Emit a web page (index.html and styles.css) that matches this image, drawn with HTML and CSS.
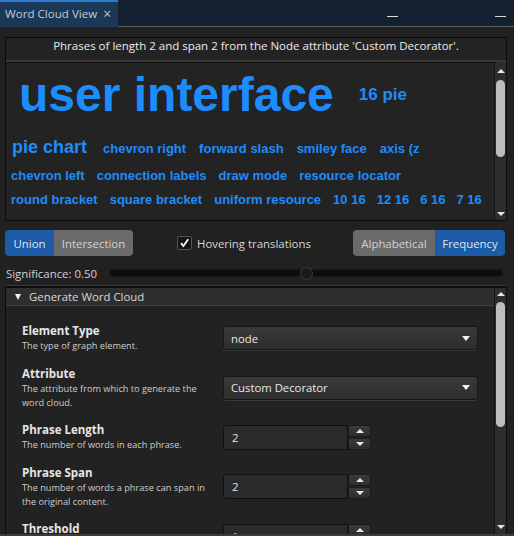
FILE: index.html
```html
<!DOCTYPE html>
<html>
<head>
<meta charset="utf-8">
<link rel="stylesheet" href="styles.css">
</head>
<body>
<div class="app">
  <div class="topbar">
    <div class="tab"><span class="tab-title">Word Cloud View</span><span class="tab-close">×</span></div>
    <div class="topbar-rest">
      <span class="min min-1"></span>
      <span class="min min-2"></span>
    </div>
  </div>
  <div class="content">
    <div class="cloud-box">
      <div class="cloud-title">Phrases of length 2 and span 2 from the Node attribute 'Custom Decorator'.</div>
      <div class="cloud">
        <div class="cloud-words">
          <div class="row row-1">
            <span class="w w-xl">user interface</span>
            <span class="w w-m">16 pie</span>
          </div>
          <div class="row row-2">
            <span class="w w-l">pie chart</span><span class="w">chevron right</span><span class="w">forward slash</span><span class="w">smiley face</span><span class="w">axis (z</span>
          </div>
          <div class="row row-3">
            <span class="w">chevron left</span><span class="w">connection labels</span><span class="w">draw mode</span><span class="w">resource locator</span>
          </div>
          <div class="row row-4">
            <span class="w">round bracket</span><span class="w">square bracket</span><span class="w">uniform resource</span><span class="w w-n">10 16</span><span class="w w-n">12 16</span><span class="w w-n">6 16</span><span class="w w-n">7 16</span>
          </div>
          <div class="row row-5">
            <span class="w">5 16</span><span class="w">text label</span><span class="w">double click</span><span class="w">bold text</span><span class="w">right click</span><span class="w">line chart</span>
          </div>
        </div>
        <div class="vscroll vscroll-cloud">
          <div class="vs-up"><span class="tri-up"></span></div>
          <div class="vs-thumb"></div>
          <div class="vs-fill"></div>
          <div class="vs-down"><span class="tri-down"></span></div>
        </div>
      </div>
    </div>

    <div class="controls">
      <div class="seg">
        <div class="btn active btn-union">Union</div>
        <div class="btn btn-inter">Intersection</div>
      </div>
      <div class="check-group">
        <span class="checkbox">
          <svg width="15" height="14" viewBox="0 0 15 14"><polyline points="3.5,7.2 6.2,10.5 11.8,2.8" fill="none" stroke="#ffffff" stroke-width="2"/></svg>
        </span>
        <span class="check-label">Hovering translations</span>
      </div>
      <div class="seg seg-right">
        <div class="btn btn-alpha">Alphabetical</div>
        <div class="btn active btn-freq">Frequency</div>
      </div>
    </div>

    <div class="sig-row">
      <span class="sig-label">Significance: 0.50</span>
      <div class="slider"><span class="slider-handle"></span></div>
    </div>

    <div class="panel">
      <div class="panel-main">
        <div class="panel-header"><span class="tri-down tri-header"></span><span>Generate Word Cloud</span></div>
        <div class="form">
          <div class="frow">
            <div class="flabel">
              <div class="ftitle">Element Type</div>
              <div class="fdesc">The type of graph element.</div>
            </div>
            <div class="combo"><span>node</span><span class="caret"></span></div>
          </div>
          <div class="frow">
            <div class="flabel">
              <div class="ftitle">Attribute</div>
              <div class="fdesc">The attribute from which to generate the<br>word cloud.</div>
            </div>
            <div class="combo"><span>Custom Decorator</span><span class="caret"></span></div>
          </div>
          <div class="frow">
            <div class="flabel">
              <div class="ftitle">Phrase Length</div>
              <div class="fdesc">The number of words in each phrase.</div>
            </div>
            <div class="spin">
              <div class="spin-field">2</div>
              <div class="spin-btns">
                <div class="spin-btn"><span class="tri-up tri-spin"></span></div>
                <div class="spin-btn"><span class="tri-down tri-spin"></span></div>
              </div>
            </div>
          </div>
          <div class="frow">
            <div class="flabel">
              <div class="ftitle">Phrase Span</div>
              <div class="fdesc">The number of words a phrase can span in<br>the original content.</div>
            </div>
            <div class="spin">
              <div class="spin-field">2</div>
              <div class="spin-btns">
                <div class="spin-btn"><span class="tri-up tri-spin"></span></div>
                <div class="spin-btn"><span class="tri-down tri-spin"></span></div>
              </div>
            </div>
          </div>
          <div class="frow">
            <div class="flabel">
              <div class="ftitle">Threshold</div>
              <div class="fdesc">The minimum number of occurrences.</div>
            </div>
            <div class="spin">
              <div class="spin-field">1</div>
              <div class="spin-btns">
                <div class="spin-btn"><span class="tri-up tri-spin"></span></div>
                <div class="spin-btn"><span class="tri-down tri-spin"></span></div>
              </div>
            </div>
          </div>
        </div>
      </div>
      <div class="vscroll vscroll-form">
        <div class="vs-up"><span class="tri-up"></span></div>
        <div class="vs-thumb"></div>
        <div class="vs-fill"></div>
        <div class="vs-down"><span class="tri-down"></span></div>
      </div>
    </div>
  </div>
</div>
</body>
</html>
```

FILE: styles.css
```css
* { box-sizing: border-box; }
html, body { margin: 0; padding: 0; }
body {
  width: 514px;
  height: 536px;
  overflow: hidden;
  background: #212121;
  font-family: "Open Sans", "Noto Sans", sans-serif;
  font-size: 11.2px;
  color: #d4d4d4;
}
.app {
  display: flex;
  flex-direction: column;
  height: 536px;
  border-bottom: 2px solid #3c3c3c;
}

/* top bar */
.topbar { display: flex; height: 27px; background: #14202f; flex: none; }
.tab {
  width: 118px;
  height: 27px;
  background: #1c3859;
  border-top: 2px solid #2c7bd1;
  display: flex;
  align-items: center;
  padding: 0 0 2px 5px;
  color: #c3cad3;
  font-size: 11.6px;
}
.tab-close { margin-left: 6px; font-size: 14px; color: #b8c0c8; }
.topbar-rest { flex: 1; display: flex; align-items: center; border-bottom: 1px solid #5a5a5a; }
.min { width: 11px; height: 1px; background: #d8d8d8; margin-top: 7px; }
.min-1 { margin-left: 269px; }
.min-2 { margin-left: 97px; }

/* content */
.content {
  flex: 1;
  display: flex;
  flex-direction: column;
  padding: 10px 7px 0 5px;
  min-height: 0;
}
.cloud-box { border: 1px solid #0c0c0c; background: #232323; flex: none; }
.cloud-title {
  height: 22px;
  line-height: 16px;
  text-align: center;
  color: #ececec;
  font-size: 11.5px;
}
.cloud {
  display: flex;
  height: 160px;
  border-top: 2px solid #383838;
  box-shadow: inset 0 1px 0 #111111;
}
.cloud-words {
  flex: 1;
  overflow: hidden;
  padding-top: 5px;
  font-family: "Liberation Sans", Arial, sans-serif;
  font-weight: bold;
  font-size: 13px;
  color: #1d8cfd;
}
.row { white-space: nowrap; padding-left: 5px; }
.w { margin-right: 13px; }
.row-1 { display: flex; align-items: center; height: 56px; padding-left: 13px; }
.w-xl { font-size: 48px; line-height: 56px; margin-right: 25px; }
.w-m { font-size: 17px; }
.row-2 { margin-top: 11px; line-height: 26px; padding-left: 6px; }
.w-l { font-size: 18px; margin-right: 16px; }
.row-3 { margin-top: 2px; line-height: 24px; }
.row-3 .w, .row-4 .w { margin-right: 12px; }
.row-4 .w-n { margin-right: 11px; }
.row-4 { line-height: 24px; }
.row-5 { line-height: 24px; margin-top: 1px; }

/* scrollbars */
.vscroll {
  width: 12px;
  flex: none;
  background: #2d2d2d;
  border-left: 1px solid #151515;
  display: flex;
  flex-direction: column;
  align-items: center;
}
.vs-up, .vs-down { display: flex; align-items: center; justify-content: center; width: 100%; flex: none; }
.vs-fill { flex: 1; }
.vs-thumb { width: 9px; background: #bdbdbd; border-radius: 5px; flex: none; }
.vscroll-cloud .vs-up { height: 17px; }
.vscroll-cloud .vs-thumb { margin-top: 1px; height: 77px; }
.vscroll-cloud .vs-down { height: 12px; }
.vscroll-form .vs-up { height: 12px; }
.vscroll-form .vs-thumb { margin-top: 2px; height: 125px; }
.vscroll-form .vs-down { height: 12px; margin-bottom: 1px; }
.tri-up {
  width: 0; height: 0;
  border-left: 4px solid transparent;
  border-right: 4px solid transparent;
  border-bottom: 4px solid #e6e6e6;
}
.tri-down {
  width: 0; height: 0;
  border-left: 4px solid transparent;
  border-right: 4px solid transparent;
  border-top: 4px solid #e6e6e6;
}

/* controls */
.controls {
  display: flex;
  align-items: center;
  margin-top: 9px;
  height: 26px;
  margin-right: 2px;
  flex: none;
}
.seg { display: flex; }
.seg-right { margin-left: auto; }
.btn {
  height: 26px;
  display: flex;
  align-items: center;
  justify-content: center;
  color: #d2d2d2;
  background: #6a6a6a;
  border-radius: 4px;
  font-size: 11.4px;
}
.btn.active { background: #1e5ba7; color: #dce6f2; }
.btn-union { width: 49px; border-radius: 4px 0 0 4px; }
.btn-inter { width: 79px; border-radius: 0 4px 4px 0; }
.btn-alpha { width: 82px; border-radius: 4px 0 0 4px; }
.btn-freq { width: 70px; border-radius: 0 4px 4px 0; }
.check-group { display: flex; align-items: center; margin-left: 44px; }
.checkbox {
  width: 15px;
  height: 14px;
  border: 1px solid #555555;
  background: #151515;
  border-radius: 2px;
  display: flex;
  align-items: center;
  justify-content: center;
}
.checkbox svg { display: block; }
.check-label { margin-left: 5px; color: #d6d6d6; font-size: 11.4px; }

/* significance */
.sig-row {
  display: flex;
  align-items: center;
  height: 20px;
  margin-top: 7px;
  padding-left: 1px;
  flex: none;
}
.sig-label { width: 104px; color: #d0d0d0; font-size: 11.4px; }
.slider {
  flex: 1;
  position: relative;
  height: 6px;
  margin-right: 5px;
  background: #0d0d0d;
  border-radius: 3px;
  box-shadow: 0 0 0 1px #1a1a1a;
}
.slider-handle {
  position: absolute;
  left: 50%;
  top: 50%;
  width: 13px;
  height: 13px;
  margin: -6.5px 0 0 -6.5px;
  border-radius: 50%;
  background: #1a1a1a;
  border: 1px solid #3c3c3c;
}

/* panel */
.panel {
  flex: 1;
  min-height: 0;
  display: flex;
  margin-top: 3px;
  border-top: 2px solid #0c0c0c;
  border-left: 1px solid #0c0c0c;
  border-right: 1px solid #0c0c0c;
  box-shadow: 0 -1px 0 #3a3a3a;
  background: #222222;
}
.panel-main { flex: 1; display: flex; flex-direction: column; min-width: 0; }
.panel-header {
  height: 18px;
  flex: none;
  display: flex;
  align-items: center;
  padding-left: 9px;
  background: #2e2e2e;
  border-bottom: 1px solid #3e3e3e;
  color: #d8d8d8;
  font-size: 11.4px;
}
.tri-header {
  border-left-width: 3.5px;
  border-right-width: 3.5px;
  border-top: 6px solid #f0f0f0;
  margin-right: 8px;
}
.form {
  flex: 1;
  min-height: 0;
  overflow: hidden;
  display: flex;
  flex-direction: column;
  gap: 12.5px;
  padding: 17px 0 0 16px;
}
.frow { display: grid; grid-template-columns: 201px 255px; align-items: center; }
.ftitle { font-weight: 700; font-size: 11.5px; line-height: 16px; color: #e6e6e6; }
.fdesc { font-size: 9.2px; line-height: 14px; color: #cdcdcd; }
.combo {
  height: 24px;
  display: flex;
  align-items: center;
  justify-content: space-between;
  padding: 0 7px;
  background: linear-gradient(#3a3a3a, #2e2e2e);
  border: 1px solid #161616;
  border-radius: 3px;
  box-shadow: 0 1px 0 #383838;
  color: #e8e8e8;
  font-size: 11.3px;
}
.caret {
  width: 0; height: 0;
  border-left: 4px solid transparent;
  border-right: 4px solid transparent;
  border-top: 5px solid #f2f2f2;
}
.spin { display: flex; width: 148px; height: 25px; }
.spin-field {
  width: 125px;
  background: #2b2b2b;
  border: 1px solid #111111;
  border-radius: 3px 0 0 3px;
  padding-left: 8px;
  display: flex;
  align-items: center;
  color: #dbe4f0;
  font-size: 11.5px;
}
.spin-btns { width: 23px; display: flex; flex-direction: column; gap: 1px; }
.spin-btn {
  flex: 1;
  background: linear-gradient(#3a3a3a, #2e2e2e);
  border: 1px solid #1a1a1a;
  border-radius: 2px;
  display: flex;
  align-items: center;
  justify-content: center;
}
.tri-spin { border-left-width: 4.5px; border-right-width: 4.5px; }
```
